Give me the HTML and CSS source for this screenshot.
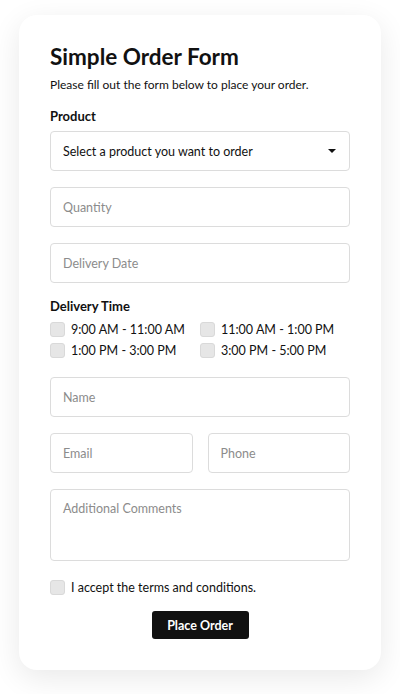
FILE: index.html
```html
<!DOCTYPE html>
<html lang="en">
<head>
    <meta charset="UTF-8">
    <meta name="viewport" content="width=device-width, initial-scale=1.0">
    <title>Simple Order Form</title>
    <link rel="stylesheet" href="styles.css">
</head>
<body>
    <div class="card">
        <h1>Simple Order Form</h1>
        <p class="intro">Please fill out the form below to place your order.</p>

        <form class="order-form">
            <label class="field-label" for="product">Product</label>
            <div class="select-wrap">
                <select id="product">
                    <option>Select a product you want to order</option>
                    <option>Product A</option>
                    <option>Product B</option>
                </select>
                <svg class="caret" width="8" height="4" viewBox="0 0 8 4"><path d="M0 0h8L4 4z" fill="#111"/></svg>
            </div>

            <input class="field" type="text" placeholder="Quantity">
            <input class="field" type="text" placeholder="Delivery Date">

            <div class="field-label time-label">Delivery Time</div>
            <div class="time-grid">
                <label class="check"><input type="checkbox"> 9:00 AM - 11:00 AM</label>
                <label class="check"><input type="checkbox"> 11:00 AM - 1:00 PM</label>
                <label class="check"><input type="checkbox"> 1:00 PM - 3:00 PM</label>
                <label class="check"><input type="checkbox"> 3:00 PM - 5:00 PM</label>
            </div>

            <input class="field name-field" type="text" placeholder="Name">
            <div class="row">
                <input class="field" type="email" placeholder="Email">
                <input class="field" type="tel" placeholder="Phone">
            </div>
            <textarea class="field comments" placeholder="Additional Comments"></textarea>

            <label class="check terms"><input type="checkbox"> I accept the terms and conditions.</label>

            <div class="actions">
                <button type="button" class="btn-order">Place Order</button>
            </div>
        </form>
    </div>
</body>
</html>
```

FILE: styles.css
```css
* {
    box-sizing: border-box;
}

body {
    margin: 0;
    padding: 15px 19px 24px;
    background-color: #fff;
    font-family: Lato, "Open Sans", Arial, sans-serif;
    color: #111;
}

.card {
    background: #fff;
    border-radius: 18px;
    padding: 28px 31px 31px;
    box-shadow: 0 8px 30px rgba(0, 0, 0, 0.09);
}

h1 {
    font-size: 22.5px;
    line-height: 28px;
    font-weight: 700;
    margin: 0;
}

.intro {
    font-size: 12px;
    line-height: 18px;
    margin: 5px 0 0;
}

.order-form {
    display: flex;
    flex-direction: column;
}

.field-label {
    display: block;
    font-size: 13px;
    line-height: 18px;
    font-weight: 700;
    margin-top: 13px;
}

.select-wrap {
    position: relative;
    margin-top: 6px;
}

select,
.field {
    width: 100%;
    height: 40px;
    border: 1px solid #dcdcdc;
    border-radius: 4px;
    background: #fff;
    font-family: inherit;
    font-size: 12.5px;
    color: #111;
    padding: 0 12px;
    outline: none;
}

select {
    appearance: none;
    -webkit-appearance: none;
    display: block;
}

.caret {
    position: absolute;
    right: 14px;
    top: 18px;
}

.field {
    margin-top: 16px;
}

.field::placeholder {
    color: #8c8c8c;
}

.time-label {
    margin-top: 14px;
}

.time-grid {
    display: grid;
    grid-template-columns: 150px 150px;
    row-gap: 6px;
    margin-top: 7px;
}

.check {
    display: flex;
    align-items: center;
    gap: 6px;
    font-size: 12.5px;
    line-height: 15px;
}

.check input {
    appearance: none;
    -webkit-appearance: none;
    width: 15px;
    height: 15px;
    margin: 0;
    border: 1px solid #d9d9d9;
    border-radius: 3px;
    background: #e6e6e6;
}

.name-field {
    margin-top: 19px;
}

.row {
    display: flex;
    gap: 15px;
}

.comments {
    height: 72px;
    padding-top: 11px;
    resize: none;
    display: block;
}

.terms {
    margin-top: 19px;
}

.actions {
    display: flex;
    justify-content: center;
    margin-top: 16px;
}

.btn-order {
    background: #111;
    color: #fff;
    border: none;
    border-radius: 3px;
    width: 97px;
    height: 28px;
    font-family: inherit;
    font-size: 12.5px;
    font-weight: 700;
    cursor: pointer;
}
```
